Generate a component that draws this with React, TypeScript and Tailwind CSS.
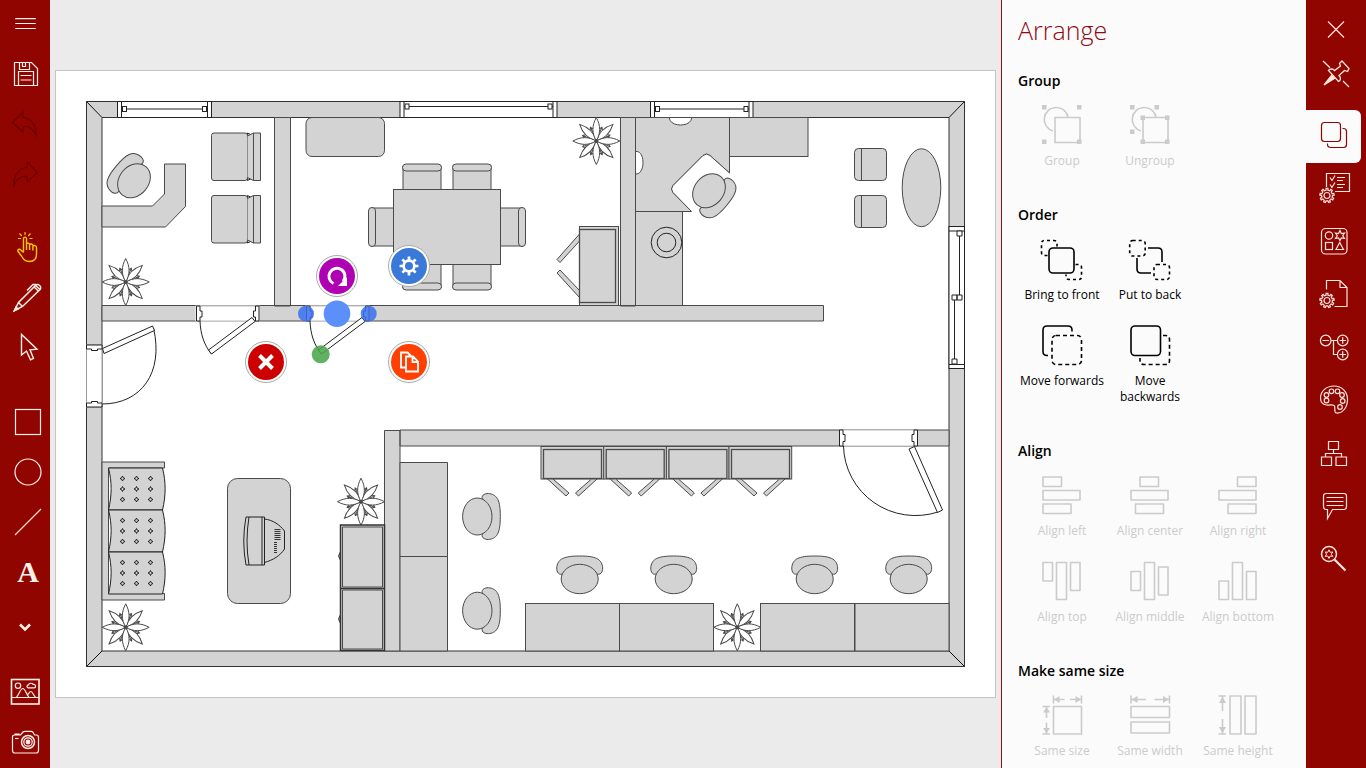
import React, { useState } from 'react';
import type { ReactNode } from 'react';

const WALL = '#d3d3d3';
const INK = '#4a4a4a';

/* ---------- shared icon pieces ---------- */

const gearPath = (r: number, teeth: number, depth: number) => {
  const pts: string[] = [];
  const step = (Math.PI * 2) / teeth;
  for (let i = 0; i < teeth; i++) {
    const a = i * step - Math.PI / 2;
    [
      [r - depth, -0.5],
      [r - depth, -0.26],
      [r, -0.18],
      [r, 0.18],
      [r - depth, 0.26],
    ].forEach(([rad, k]) => {
      pts.push(`${(rad * Math.cos(a + k * step)).toFixed(2)} ${(rad * Math.sin(a + k * step)).toFixed(2)}`);
    });
  }
  return `M${pts.join('L')}Z`;
};

const Gear = ({ x, y }: { x: number; y: number }) => (
  <g transform={`translate(${x} ${y})`}>
    <path d={gearPath(7.2, 9, 1.8)} />
    <circle r="3" />
  </g>
);

/* ---------- left tool bar ---------- */

type ToolProps = { label: string; className?: string; disabled?: boolean; children: ReactNode };

const Tool = ({ label, className = 'h-[50px] text-[#fff0ea]', disabled, children }: ToolProps) => (
  <button type="button" aria-label={label} disabled={disabled} className={`block w-full shrink-0 cursor-pointer ${className}`}>
    <svg className="h-full w-full" viewBox="0 0 50 50" fill="none" stroke="currentColor" strokeWidth="1.2">
      {children}
    </svg>
  </button>
);

const ToolBar = () => (
  <aside className="flex w-[50px] shrink-0 flex-col bg-[#910500]">
    <Tool label="Menu" className="h-[49px] text-[#fff0ea]">
      <path d="M15 19H36M15 24H36M15 29H36" strokeWidth="1.1" />
    </Tool>
    <Tool label="Save">
      <path d="M14.5 13.5H31.5L37.5 19.5V36.5H14.5Z" />
      <path d="M19.5 13.5V20.5H29.5V13.5M22.5 13.5V17.5H25.5V13.5M18.5 36.5V22.5H33.5V36.5M20.5 26.5H31.5M20.5 31H31.5" />
    </Tool>
    <Tool label="Undo" disabled className="h-[50px] text-[#6d0000]">
      <path d="M12.5 23.5L23 13V18.5C31 19 36.5 26 36.5 37.5C34 30 30 27 23 27.5V33Z" />
    </Tool>
    <Tool label="Redo" disabled className="h-[50px] text-[#6d0000]">
      <path d="M37.5 23.5L27 13V18.5C19 19 13.5 26 13.5 37.5C16 30 20 27 27 27.5V33Z" />
    </Tool>
    <Tool label="Touch" className="mt-[23px] h-[50px] text-[#ffc400]">
      <path d="M23.5 30.5V16.8C23.5 14.5 26.5 14.5 26.5 16.8V24.5M26.5 28V22.2C26.8 20.6 29.6 20.8 29.6 22.4V28M29.6 23C30.2 21.5 32.9 21.8 32.9 23.6V28.5M32.9 24.3C33.8 23 36.5 23.5 36.5 25.5V32C36.5 37 34 39.5 29.5 39.5C25 39.5 23.5 37.5 21.5 34L18 29.5C17 27.5 19.5 26.7 20.8 27.9L23.5 30.5" strokeWidth="1.4" />
      <path d="M25 10V13M19.5 11.5L21.8 14M30.5 11.5L28.2 14M18 16.5H21M29.5 16.5H32.5" />
    </Tool>
    <Tool label="Pen">
      <path d="M14.5 38.500L18.5 30.5L35.5 13.5L40 17.5L22.5 34.5ZM18.5 30.5L22.5 34.5M35.5 13.5C38 10.8 42.5 14.8 40 17.5M27 18.5L33 12.5H36M34 15L38.5 19" strokeWidth="1.5" />
      <path d="M14 39L16 34.8L18.2 37Z" fill="currentColor" />
    </Tool>
    <Tool label="Select">
      <path d="M21.5 12.5V33L26.5 29L30.5 37.8L33.5 36.5L30 27.8L37 27.2Z" strokeWidth="1.4" />
    </Tool>
    <Tool label="Rectangle" className="mt-[25px] h-[50px] text-[#fff0ea]">
      <rect x="15.5" y="12.5" width="25" height="25" />
    </Tool>
    <Tool label="Ellipse">
      <circle cx="28" cy="25" r="13" />
    </Tool>
    <Tool label="Line">
      <path d="M15 38L41 12" stroke="#ffd9c4" />
    </Tool>
    <button type="button" aria-label="Text" className="h-[50px] w-full shrink-0 cursor-pointer pl-1.5 font-['Liberation_Serif',serif] text-[30px] leading-[50px] font-bold text-[#fff0ea]">
      A
    </button>
    <Tool label="More" className="mt-[5px] h-[50px] text-[#fff0ea]">
      <path d="M20 22.500L25 27.500L30 22.500" strokeWidth="2.600" />
    </Tool>
    <Tool label="Image" className="mt-auto h-[50px] text-[#fff0ea]">
      <rect x="11.5" y="11.5" width="27.5" height="24.5" strokeWidth="1.6" />
      <path d="M11.5 29.5H39M16.500 29C19 27.5 20 20.5 22.8 20.5C25.5 20.5 26.5 27.5 29 29M27.5 27C29 25 29.5 23.5 31 23.5C32.6 23.5 33.2 27.5 35.5 29" />
      <circle cx="18" cy="17.7" r="2.7" />
      <path d="M28.5 19.8C26.5 19.8 26.5 16.8 28.6 16.8C29 14.8 32.5 14.8 33 16.3C36 16 36.5 19.8 34 19.8Z" />
    </Tool>
    <Tool label="Camera" className="h-[50px] text-[#fff0ea]">
      <path d="M12.5 18.5C12.5 17.5 13.5 17 15 17H20.5L23 14C23.5 13.4 24 13.3 24.8 13.3H31C32 13.3 32.5 13.6 33 14.3L34.5 17H36.5C38 17 38.5 18 38.5 19.5V32.5C38.5 34.5 37.5 35 36 35H15C13 35 12.5 34.5 12.5 32.5ZM15 17V16H19V17" />
      <circle cx="28" cy="24" r="6.5" strokeWidth="1.5" />
      <circle cx="28" cy="24" r="4.2" />
      <circle cx="28" cy="24" r="1.8" fill="currentColor" />
      <path d="M15 20.5H18.5" />
    </Tool>
  </aside>
);

/* ---------- floor plan ---------- */

const Plant = ({ x, y }: { x: number; y: number }) => (
  <g transform={`translate(${x} ${y})`} fill="#fff">
    {[22, 67, 112, 157, 202, 247, 292, 337].map((a) => (
      <path key={a} transform={`rotate(${a})`} d="M0 0C4 -5 3.5 -11 0 -15C-3.5 -11 -4 -5 0 0ZM0 0V-15" />
    ))}
    {[45, 135, 225, 315, 0, 90, 180, 270].map((a) => (
      <path key={a} transform={`rotate(${a})`} d="M0 0C4.5 -8 4.5 -15 0 -23.5C-4.5 -15 -4.5 -8 0 0Z" />
    ))}
    <circle r="1.5" fill={INK} />
  </g>
);

const OfficeChair = ({ x, y, turn = 0 }: { x: number; y: number; turn?: number }) => (
  <g transform={`translate(${x} ${y}) rotate(${turn})`}>
    <path d="M-17.5 -5C-22 -3.5 -23.5 -9 -22.8 -12.5C-21.5 -20 -16 -23 0 -23C16 -23 21.5 -20 22.8 -12.5C23.5 -9 22 -3.5 17.5 -5Z" />
    <ellipse rx="18.5" ry="14.7" />
  </g>
);

const Armchair = ({ y }: { y: number }) => (
  <g transform={`translate(0 ${y})`}>
    <path d="M247.5 0L253.5 3V44.5L247.5 47.5Z" stroke="#222" />
    <rect x="211.5" y="0" width="36" height="47.5" rx="2.5" />
    <path d="M247.5 3L253.5 0H260.5V47.5H253.5L247.5 44.5M253.5 0V47.5" />
  </g>
);

const DiningChair = ({ x, y, turn = 0 }: { x: number; y: number; turn?: number }) => (
  <g transform={`translate(${x} ${y}) rotate(${turn})`}>
    <rect x="-19" y="-10" width="38" height="25" />
    <rect x="-19.5" y="-12.5" width="39" height="7" rx="3.5" />
  </g>
);

const Stool = ({ y }: { y: number }) => (
  <g>
    <rect x="854.5" y={y} width="32" height="32" rx="4" />
    <path d={`M861.5 ${y}V${y + 32}`} />
  </g>
);

const Cabinet = ({ x }: { x: number }) => (
  <g transform={`translate(${x} 446.5)`}>
    <rect width="62.7" height="32.5" />
    <rect x="2.5" y="3" width="58" height="29" strokeWidth="1.3" />
    <path d="M6.5 32.5L25 49.5L28 46.5L12 32.5ZM56 32.5L37.5 49.5L34.5 46.5L50.5 32.5Z" />
  </g>
);

const Door = ({ x }: { x: number }) => (
  <g transform={`translate(${x} 0)`} fill="#fff">
    <rect x="196" y="306" width="63" height="15" stroke="#fff" />
    <path d="M196.5 306H259M196.5 321H259" stroke="#bbb" />
    <path d="M196.5 306V321H200V317H202V311H200V306ZM259 306V321H255.5V317H253.5V311H255.5V306Z" stroke="#222" />
    <path d="M200 321C200.5 334 204 345 211.5 354" fill="none" stroke="#222" />
    <path d="M252 317.5L255 321.5L211.5 354L208.5 350Z" stroke="#222" />
  </g>
);

const HWindow = ({ x, w, y }: { x: number; w: number; y: number }) => (
  <g fill="#fff" stroke="#222">
    <rect x={x} y="101.5" width={w} height="16" />
    <path d={`M${x + 4} 101.5V117.5M${x + w - 4} 101.5V117.5M${x + 4} ${y}H${x + w - 4}`} />
    <rect x={x + 5} y={y - 2.5} width="4" height="5" />
    <rect x={x + w - 9} y={y - 2.5} width="4" height="5" />
  </g>
);

const Cushion = ({ y }: { y: number }) => (
  <g transform={`translate(0 ${y})`}>
    <path d="M108.5 0C112 14 112 27 108.5 42H162.5C166 27 166 14 162.5 0Z" stroke="#222" />
    {[10.5, 21, 31.5].map((cy) =>
      [122.5, 136.5, 150.5].map((cx) => (
        <path key={`${cx}-${cy}`} transform={`translate(${cx} ${cy})`} d="M0 -2.5L.8 -.8L2.5 0L.8 .8L0 2.5L-.8 .8L-2.5 0L-.8 -.8Z" stroke="#222" />
      )),
    )}
  </g>
);

const FloorPlan = () => (
  <svg className="block h-[626px] w-[939px]" viewBox="56 71 939 626" fill={WALL} stroke={INK} strokeWidth="1" role="img" aria-label="Office floor plan">
    {/* outer walls */}
    <path fillRule="evenodd" d="M86.5 101.5H964.5V666.5H86.5ZM102 117.5V651H949V117.5Z" stroke="#333" />
    <path d="M86.5 101.5L102 117.5M964.5 101.5L949 117.5M86.5 666.5L102 651M964.5 666.5L949 651" stroke="#111" />
    <HWindow x={117.5} w={94} y={109} />
    <HWindow x={400} w={157} y={106.5} />
    <HWindow x={650.5} w={102.5} y={109} />
    <g fill="#fff" stroke="#222">
      <rect x="949" y="226.5" width="15.5" height="142" />
      <path d="M949 231H964.5M949 364.5H964.5M959.5 235V296M954.5 299V361" />
      <path d="M957 231H962V236H957ZM952 295H957V300H952ZM957 295H962V300H957ZM952 359H957V364H952Z" />
    </g>

    {/* inner walls */}
    <path d="M274.5 117.5H290.5V306H274.5ZM620.5 117.5H635.5V306H620.5ZM102 305.5H823.5V321H102Z" />
    <path d="M384.5 430.5H400V651H384.5ZM400 430H949V446H400Z" />
    <Door x={0} />
    <Door x={110} />

    {/* entrance */}
    <g fill="#fff">
      <rect x="86.5" y="345" width="15.5" height="62" stroke="#999" />
      <path d="M86.5 345H102V349H97.5V350.5H91.5V349H86.5ZM86.5 407H102V403H97.5V401.5H91.5V403H86.5Z" stroke="#222" />
      <path d="M102 404C141 404 164 373 153.5 328" stroke="#222" />
      <path d="M102.5 348.5L152.5 326L154.5 330.5L104 353.5Z" stroke="#222" />
    </g>

    {/* conference room door */}
    <g fill="#fff" stroke="#222">
      <rect x="840" y="430" width="77" height="16" stroke="#bbb" />
      <path d="M839.5 430V446H843V441.5H845V434.5H843V430ZM917.5 430V446H914V441.5H912V434.5H914V430Z" />
      <path d="M843.5 446A72 71 0 0 0 938 512" fill="none" />
      <path d="M909 449L914.5 446.5L942.5 510L937.5 512.5Z" />
    </g>

    {/* reception office */}
    <path d="M102 206H152.5L164.5 194V164H185.5V206.5L165.5 227H102Z" />
    <OfficeChair x={134} y={180.7} turn={-50} />
    <Armchair y={133} />
    <Armchair y={195.5} />
    <Plant x={125.7} y={282} />

    {/* meeting room */}
    <rect x="306" y="117.5" width="78.5" height="39" rx="6" />
    <DiningChair x={422} y={176.5} />
    <DiningChair x={472} y={176.5} />
    <DiningChair x={422} y={277.5} turn={180} />
    <DiningChair x={472} y={277.5} turn={180} />
    <DiningChair x={381} y={227} turn={-90} />
    <DiningChair x={513} y={227} turn={90} />
    <rect x="393.5" y="189.5" width="107" height="75" />
    <Plant x={596.3} y={141} />
    <path d="M579.5 234L557 259.5L560 262.5L579.5 241ZM579.5 297.5L557 273L560 270L579.5 290.5Z" />
    <rect x="579.5" y="226.5" width="39" height="79" />
    <rect x="579.5" y="229.5" width="36" height="73" strokeWidth="1.3" />

    {/* manager office */}
    <path d="M635.5 117.5H729.5V173L710 155.5Q706.5 152.5 703 155.5L673 185.5Q670 189 673 192.5L691.5 211.5H635.5Z" />
    <rect x="729.5" y="117.5" width="78.5" height="39" />
    <rect x="635.5" y="211.5" width="47" height="94" />
    <path d="M669.5 117.5C669 127.5 692 127.5 691.5 117.5ZM635.5 151.5C645.5 150 645.5 175 635.5 174Z" fill="#fff" />
    <path d="M691.5 211.5L673 192.5Q670 189 673 185.5L703 155.5Q706.5 152.5 710 155.5L729.5 173" fill="#fff" />
    <OfficeChair x={709} y={190.7} turn={130} />
    <circle cx="666.5" cy="242.5" r="15.3" stroke="#222" />
    <circle cx="666.5" cy="242.5" r="9.3" stroke="#222" />
    <Stool y={148.5} />
    <Stool y={195.5} />
    <ellipse cx="921.5" cy="187.7" rx="19.3" ry="39" />

    {/* lobby */}
    <path d="M102 462H164.500V468H108.5V593.5H164.5V600H102Z" />
    <Cushion y={468} />
    <Cushion y={510} />
    <Cushion y={552} />
    <Plant x={125.7} y={627.3} />
    <rect x="227.5" y="478.5" width="63" height="125" rx="10" />
    <path d="M264.5 519C273 520 280 525 284.5 531V549C280 556 273 560 264.5 562.5M246 517H264.5V565H246Q241.5 541 246 517ZM249 517Q245 541 249 565M262 517V565" stroke="#222" />
    <path d="M275.5 553V542M276 540V529M279 540V529" stroke="#333" strokeDasharray="1 1" strokeWidth="3" />
    <Plant x={361} y={501.7} />
    <path d="M340 552.5Q337 556 340 559.5ZM340 615.5Q337 619 340 622.5Z" />
    <path d="M340.5 525H384.5V588.5H340.5ZM340.5 588.5H384.5V650.5H340.5Z" strokeWidth="1.5" stroke="#333" />
    <path d="M342.5 527H382.5V587H342.5ZM342.5 590H382.5V649H342.5Z" />

    {/* open office */}
    <path d="M400 462.5H447.5V556.5H400ZM400 556.5H447.5V651H400Z" />
    <OfficeChair x={477.3} y={516.5} turn={90} />
    <OfficeChair x={477.3} y={610.7} turn={90} />
    {[541, 603.7, 666.4, 729].map((x) => (
      <Cabinet key={x} x={x} />
    ))}
    {[579.7, 673.7, 814.7, 908.7].map((x) => (
      <OfficeChair key={x} x={x} y={579} />
    ))}
    {[525.5, 619.5, 760.5, 855].map((x) => (
      <rect key={x} x={x} y="603.5" width="94" height="47.5" />
    ))}
    <Plant x={737.3} y={627.3} />

    {/* selection handles */}
    <g stroke="none">
      <circle cx="306" cy="313.7" r="8" fill="#3870ee" fillOpacity="0.85" />
      <circle cx="337" cy="313.7" r="13.3" fill="#5b90fb" />
      <circle cx="368.7" cy="313.7" r="8" fill="#3870ee" fillOpacity="0.85" />
      <circle cx="320.7" cy="354.3" r="9" fill="#4ca64c" fillOpacity="0.88" />
    </g>
  </svg>
);

type RoundActionProps = { label: string; className: string; children: ReactNode };

const RoundAction = ({ label, className, children }: RoundActionProps) => (
  <button type="button" aria-label={label} className={`absolute h-[42px] w-[42px] cursor-pointer rounded-full border border-[#aaaaaa] bg-white p-[2px] ${className}`}>
    <svg className="h-full w-full" viewBox="0 0 36 36" fill="none" stroke="#fff" strokeWidth="2">
      <circle cx="18" cy="18" r="18" fill="currentColor" stroke="none" />
      {children}
    </svg>
  </button>
);

const Canvas = () => (
  <main className="flex min-w-0 flex-1 items-center justify-center overflow-hidden bg-[#ebebeb]">
    <div className="relative shrink-0 border border-[#c4c4c4] bg-white">
      <FloorPlan />
      <RoundAction label="Rotate" className="top-[184px] left-[260px] text-[#b000b4]">
        <path d="M14.5 25.500A8 8 0 1 1 24 23.500" strokeWidth="3" />
        <path d="M19 28H28V19Z" fill="#fff" stroke="none" />
      </RoundAction>
      <RoundAction label="Settings" className="top-[174px] left-[332px] text-[#3a79d8]">
        <path transform="translate(18 18)" d={gearPath(9.5, 8, 2.8)} fill="#fff" stroke="none" />
        <circle cx="18" cy="18" r="4" fill="currentColor" stroke="none" />
      </RoundAction>
      <RoundAction label="Delete" className="top-[270px] left-[189px] text-[#cc0000]">
        <path d="M11.5 11.5L24.5 24.5M24.5 11.5L11.5 24.5" strokeWidth="4" />
      </RoundAction>
      <RoundAction label="Duplicate" className="top-[270px] left-[332px] text-[#ff4000]">
        <path d="M15 23.5H10V8.5H16.5L20 12M15 12.5H22L27 17.5V27.5H15ZM21.5 12.5V18H27" strokeWidth="1.8" />
      </RoundAction>
    </div>
  </main>
);

/* ---------- arrange panel ---------- */

type Command = { label: string; disabled?: boolean; icon: ReactNode };
type CommandGroup = { title: string; listClass?: string; commands: Command[] };

// icons are drawn on a 42 x 42 grid
const groups: CommandGroup[] = [
  {
    title: 'Group',
    commands: [
      {
        label: 'Group',
        disabled: true,
        icon: (
          <>
            <path d="M12 28A12 12 0 1 1 27 14" />
            <rect x="14" y="14.5" width="25" height="25" />
            <path d="M1 2H5.5V6.5H1ZM36 2H40.5V6.5H36ZM1 36.5H5.5V41H1ZM36 36.5H40.5V41H36Z" fill="currentColor" stroke="none" />
          </>
        ),
      },
      {
        label: 'Ungroup',
        disabled: true,
        icon: (
          <>
            <path d="M12 28A12 12 0 1 1 27 14" />
            <rect x="14" y="14.5" width="25" height="25" />
            <path d="M1 2H5.5V6.5H1ZM25.5 2H30V6.5H25.5ZM1 26.5H5.5V31H1ZM11.5 12.5H16V17H11.5ZM36 12.5H40.5V17H36ZM11.5 36.5H16V41H11.5ZM36 36.5H40.5V41H36Z" fill="currentColor" stroke="none" />
          </>
        ),
      },
    ],
  },
  {
    title: 'Order',
    listClass: 'w-[176px]',
    commands: [
      {
        label: 'Bring to front',
        icon: (
          <>
            <rect x="8" y="11" width="25" height="25" rx="4" />
            <path d="M6.5 18.5H3.5Q.5 18.5 .5 15.5V6.5Q.5 3.5 3.5 3.5H13Q16 3.5 16 6.5V9.5M34.5 27.5H37.5Q40.5 27.5 40.5 30.5V39.5Q40.5 42.5 37.5 42.5H28Q25 42.5 25 39.5V37.5" strokeDasharray="3 3" />
          </>
        ),
      },
      {
        label: 'Put to back',
        icon: (
          <>
            <rect x=".7" y="3.5" width="15.5" height="15.5" rx="3" strokeDasharray="3 3" />
            <rect x="25" y="27.5" width="15.5" height="15" rx="3" strokeDasharray="3 3" />
            <path d="M19 11H29Q33 11 33 15V25M8 21V32Q8 36 12 36H22" />
          </>
        ),
      },
      {
        label: 'Move forwards',
        icon: (
          <>
            <path d="M7 32.5H6Q2 32.5 2 28.5V7Q2 3 6 3H27Q31 3 31 7V8.5" />
            <rect x="11" y="12.5" width="29.5" height="29" rx="4" strokeDasharray="4 3" />
          </>
        ),
      },
      {
        label: 'Move backwards',
        icon: (
          <>
            <rect x="2" y="3" width="29.5" height="29.5" rx="4" />
            <path d="M34 12.500H36.5Q40.5 12.5 40.5 16.5V37.5Q40.5 41.5 36.5 41.5H15Q11 41.5 11 37.5V35" strokeDasharray="4 3" />
          </>
        ),
      },
    ],
  },
  {
    title: 'Align',
    commands: [
      { label: 'Align left', disabled: true, icon: <path d="M2 4H20.5V13.5H2ZM2 17.5H39V27H2ZM2 31H30V40.5H2Z" /> },
      { label: 'Align center', disabled: true, icon: <path d="M11 4H29.5V13.5H11ZM2 17.5H39V27H2ZM6.5 31H34.5V40.5H6.5Z" /> },
      { label: 'Align right', disabled: true, icon: <path d="M20.5 4H39V13.5H20.5ZM2 17.5H39V27H2ZM11 31H39V40.5H11Z" /> },
      { label: 'Align top', disabled: true, icon: <path d="M2 3.5H11.5V22H2ZM15.5 3.5H25.5V40.5H15.5ZM29.5 3.5H39V31.5H29.5Z" /> },
      { label: 'Align middle', disabled: true, icon: <path d="M2 12.5H11.5V31.5H2ZM15.5 3.5H25.5V40.5H15.5ZM29.5 8H39V36H29.5Z" /> },
      { label: 'Align bottom', disabled: true, icon: <path d="M2 22H11.5V40.5H2ZM15.5 3.5H25.5V40.5H15.5ZM29.5 12.5H39V40.5H29.5Z" /> },
    ],
  },
  {
    title: 'Make same size',
    commands: [
      {
        label: 'Same size',
        disabled: true,
        icon: (
          <>
            <rect x="12.5" y="13.5" width="28" height="27.5" />
            <path d="M12.5 2.5V10.5M40.5 2.5V10.5M13 6.5H23.5M29 6.5H40M1.5 13.5H9M1.5 41H9M5.5 14V25M5.5 29.5V40.5" />
            <path d="M13 6.5L18.5 3V10ZM40 6.5L34.5 3V10ZM5.5 14L2 19.5H9ZM5.5 40.5L2 35H9Z" fill="currentColor" stroke="none" />
          </>
        ),
      },
      {
        label: 'Same width',
        disabled: true,
        icon: (
          <>
            <path d="M2 13.5H40.5V24.5H2ZM2 29H40.5V40H2Z" />
            <path d="M2 2.5V10.5M40.5 2.5V10.5M2.5 6.5H17M25.5 6.5H40" />
            <path d="M2.5 6.5L8.5 3V10ZM40 6.5L34 3V10Z" fill="currentColor" stroke="none" />
          </>
        ),
      },
      {
        label: 'Same height',
        disabled: true,
        icon: (
          <>
            <path d="M13 3H24V41H13ZM28 3H39V41H28Z" />
            <path d="M1.5 3H9M1.5 41H9M5.5 3.5V18M5.5 26V40.5" />
            <path d="M5.5 3.5L2 10H9ZM5.5 40.5L2 34H9Z" fill="currentColor" stroke="none" />
          </>
        ),
      },
    ],
  },
];

const CommandTile = ({ label, disabled, icon }: Command) => (
  <button type="button" disabled={disabled} className="flex w-[88px] cursor-pointer flex-col items-center pt-2 pb-3 text-black disabled:cursor-default disabled:text-[#cbcbcb]">
    <svg className="h-[42px] w-[42px] overflow-visible" viewBox="0 0 42 42" fill="none" stroke="currentColor" strokeWidth="1.6" strokeLinejoin="round" aria-hidden="true">
      {icon}
    </svg>
    <span className="mt-2 text-center text-xs leading-4">{label}</span>
  </button>
);

const ArrangePanel = () => (
  <section className="w-[305px] shrink-0 overflow-y-auto border-l border-[#8f1015] bg-[#fbfbfb] px-4 [scrollbar-width:none]">
    <h1 className="mt-3 mb-[23px] text-[25px] leading-9 font-light text-[#910a12]">Arrange</h1>
    {groups.map((group) => (
      <section key={group.title} className="mb-6">
        <h2 className="mb-1 text-sm leading-5 font-semibold text-black">{group.title}</h2>
        <div className={`flex flex-wrap items-start ${group.listClass ?? ''}`}>
          {group.commands.map((command) => (
            <CommandTile key={command.label} {...command} />
          ))}
        </div>
      </section>
    ))}
  </section>
);

/* ---------- right tab rail ---------- */

const tabs: { label: string; icon: ReactNode }[] = [
  {
    label: 'Arrange',
    icon: (
      <>
        <rect x="15.5" y="12.5" width="19" height="19" rx="3" />
        <path d="M36.5 18.5H37.5Q40.5 18.5 40.5 21.5V34.5Q40.5 37.5 37.5 37.5H25Q21.5 37.5 21.5 34.5V33.5" />
      </>
    ),
  },
  {
    label: 'Properties',
    icon: (
      <>
        <path d="M20.5 24V10.5H43.5V28.5H29M24 14.5L26 17.5L29 12.5M24 21.5L26 24.5L29 19.5M31 14.5H39M31 17.5H37M31 21.5H39M31 24.5H37" />
        <Gear x={21} y={32.5} />
      </>
    ),
  },
  {
    label: 'Shapes',
    icon: (
      <>
        <rect x="15.5" y="12.5" width="25.5" height="25.5" rx="4" />
        <circle cx="23" cy="19.5" r="3.7" />
        <rect x="19.5" y="26.5" width="7" height="7" />
        <path d="M33.7 26.5L37.5 33.5H30ZM34 14.5L35.3 17.5L38.5 17L36.7 19.7L38.5 22.5L35.3 22L34 24.5L32.5 22L29.5 22.5L31.3 19.7L29.5 17L32.5 17.5Z" />
      </>
    ),
  },
  {
    label: 'Document',
    icon: (
      <>
        <path d="M20.5 20.5V11.5H34L41 18.5V37.5H28.5M34 11.5V18.5H41" />
        <Gear x={21} y={31.5} />
      </>
    ),
  },
  {
    label: 'Outline',
    icon: (
      <>
        <circle cx="19.7" cy="18.5" r="5.3" />
        <circle cx="36.7" cy="18.5" r="5.3" />
        <circle cx="36.7" cy="32.5" r="5.3" />
        <path d="M25 18.5H31.5M27.5 18.5V32.5H31.5M16.5 18.5H23M33.5 18.5H40M36.7 15.3V21.7M33.5 32.5H40M36.7 29.3V35.7" />
      </>
    ),
  },
  {
    label: 'Theme',
    icon: (
      <>
        <path d="M28 11C36 11 41.5 17 41.5 24.5C41.5 32 37 38.5 30.5 38C27.5 37.5 29.5 33.5 28.5 31C27.5 28.5 24 30.5 20.5 30C16.5 29.5 14.5 27 14.5 23C14.5 16 20.5 11 28 11Z" />
        {[
          [20.5, 20],
          [25.5, 16.3],
          [31.5, 16.3],
          [36, 20],
          [36.7, 26],
          [34, 32],
          [20.5, 25.5],
        ].map(([cx, cy]) => (
          <circle key={`${cx}-${cy}`} cx={cx} cy={cy} r="2.3" />
        ))}
      </>
    ),
  },
  {
    label: 'Layout',
    icon: <path d="M22.5 13.5H32.5V21.5H22.5ZM15.5 29H25.5V37.5H15.5ZM30 29H40.5V37.5H30ZM27.5 21.5V25.5M19.5 29V25.5H35.5V29" />,
  },
  {
    label: 'Comments',
    icon: <path d="M20 12.5H38Q40.5 12.5 40.5 15V25.5Q40.5 28.5 38 28.5H26.5L21.5 37.5V28.5H20Q17.5 28.5 17.5 25.5V15Q17.5 12.5 20 12.5ZM20.5 16.5H37.5M20.5 20.5H37.5M20.5 24.5H37.5" />,
  },
  {
    label: 'Search',
    icon: (
      <>
        <circle cx="23" cy="20" r="7.5" strokeWidth="1.5" />
        <path d="M28.5 25.5L39.5 36.5" strokeWidth="2.2" />
        <path d="M23 15.8L24.2 18.3L26.8 18L25.3 20.2L26.8 22.4L24.2 22L23 24.5L21.8 22L19.2 22.4L20.7 20.2L19.2 18L21.8 18.3Z" strokeWidth="1" />
      </>
    ),
  },
];

const TabRail = () => {
  const [active, setActive] = useState('Arrange');

  return (
    <nav className="flex w-[60px] shrink-0 flex-col overflow-hidden bg-[#910500] text-[#fde6df]">
      <button type="button" aria-label="Close panel" className="h-[55px] w-full shrink-0 cursor-pointer">
        <svg className="h-full w-full" viewBox="0 0 60 55" fill="none" stroke="currentColor" strokeWidth="1.1">
          <path d="M22 21.5L38 37.5M38 21.5L22 37.5" />
        </svg>
      </button>
      <button type="button" aria-label="Unpin panel" className="h-[55px] w-full shrink-0 cursor-pointer">
        <svg className="h-full w-full" viewBox="0 0 60 55" fill="none" stroke="currentColor" strokeWidth="1.3">
          <path d="M17 6L24 12.7M37 26L43 32M36 6L43 13.5L41.5 16.5L38.5 15.5L33 20.5C35.5 23 34.5 25.5 32.5 26.5L22.5 15.5C24 13.5 27 13.5 28.5 15.5L34.5 11L33.5 8.5Z" />
          <path d="M18 30L25.5 20.5L28.5 23.5Z" fill="currentColor" />
        </svg>
      </button>
      {tabs.map((tab) => (
        <button
          key={tab.label}
          type="button"
          aria-label={tab.label}
          aria-pressed={active === tab.label}
          onClick={() => setActive(tab.label)}
          className={`h-[53px] w-[55px] shrink-0 cursor-pointer rounded-r-md ${active === tab.label ? 'bg-[#fbfbfb] text-[#910500]' : ''}`}
        >
          <svg className="h-full w-full" viewBox="0 0 55 53" fill="none" stroke="currentColor" strokeWidth="1.2">
            {tab.icon}
          </svg>
        </button>
      ))}
    </nav>
  );
};

const App = () => (
  <div className="flex h-screen w-full overflow-hidden font-['Open_Sans','Noto_Sans',sans-serif]">
    <ToolBar />
    <Canvas />
    <ArrangePanel />
    <TabRail />
  </div>
);

export default App;
